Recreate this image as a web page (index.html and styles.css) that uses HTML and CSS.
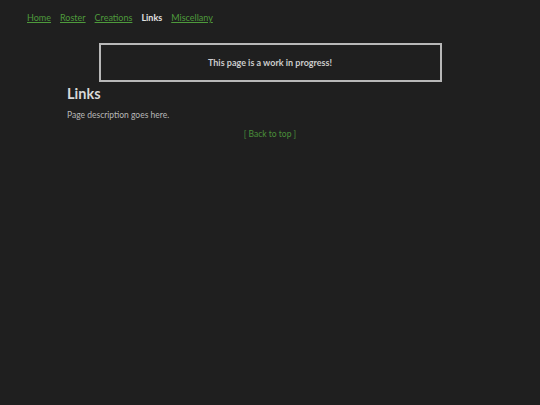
FILE: index.html
```html
<!DOCTYPE html>
<html lang="en">
<head>
    <meta charset="UTF-8">
    <meta name="viewport" content="width=device-width, initial-scale=1.0">
    <title>Links</title>
    <link rel="stylesheet" href="styles.css">
</head>
<body>
    <nav class="topnav">
        <a href="#">Home</a>
        <a href="#">Roster</a>
        <a href="#">Creations</a>
        <span class="current">Links</span>
        <a href="#">Miscellany</a>
    </nav>

    <main class="content" id="top">
        <div class="notice">This page is a work in progress!</div>
        <h1>Links</h1>
        <p class="desc">Page description goes here.</p>
        <p class="backtop"><a href="#top">[ Back to top ]</a></p>
    </main>
</body>
</html>
```

FILE: styles.css
```css
body {
    margin: 0;
    background-color: #1f1f1f;
    color: #c8c8c8;
    font-family: Lato, "Noto Sans", sans-serif;
    font-size: 8.5px;
}
a {
    color: #4e9a3c;
}
.topnav {
    display: flex;
    gap: 9px;
    padding: 11px 27px 0;
    font-size: 9px;
    line-height: 13px;
}
.topnav .current {
    color: #e0e0e0;
    font-weight: bold;
}
.content {
    width: 406px;
    margin: 19px auto 0;
}
.notice {
    width: 339px;
    height: 35px;
    margin: 0 auto;
    border: 2px solid #b8b8b8;
    display: flex;
    align-items: center;
    justify-content: center;
    font-size: 9px;
    font-weight: bold;
    color: #cccccc;
}
h1 {
    margin: 4px 0 0;
    font-size: 14.5px;
    line-height: 16px;
    color: #d8d8d8;
}
.desc {
    margin: 7px 0 0;
    line-height: 12px;
    color: #b8b8b8;
}
.backtop {
    margin: 7px 0 0;
    text-align: center;
    line-height: 12px;
}
.backtop a {
    text-decoration: none;
    color: #4a8f3a;
}
```
